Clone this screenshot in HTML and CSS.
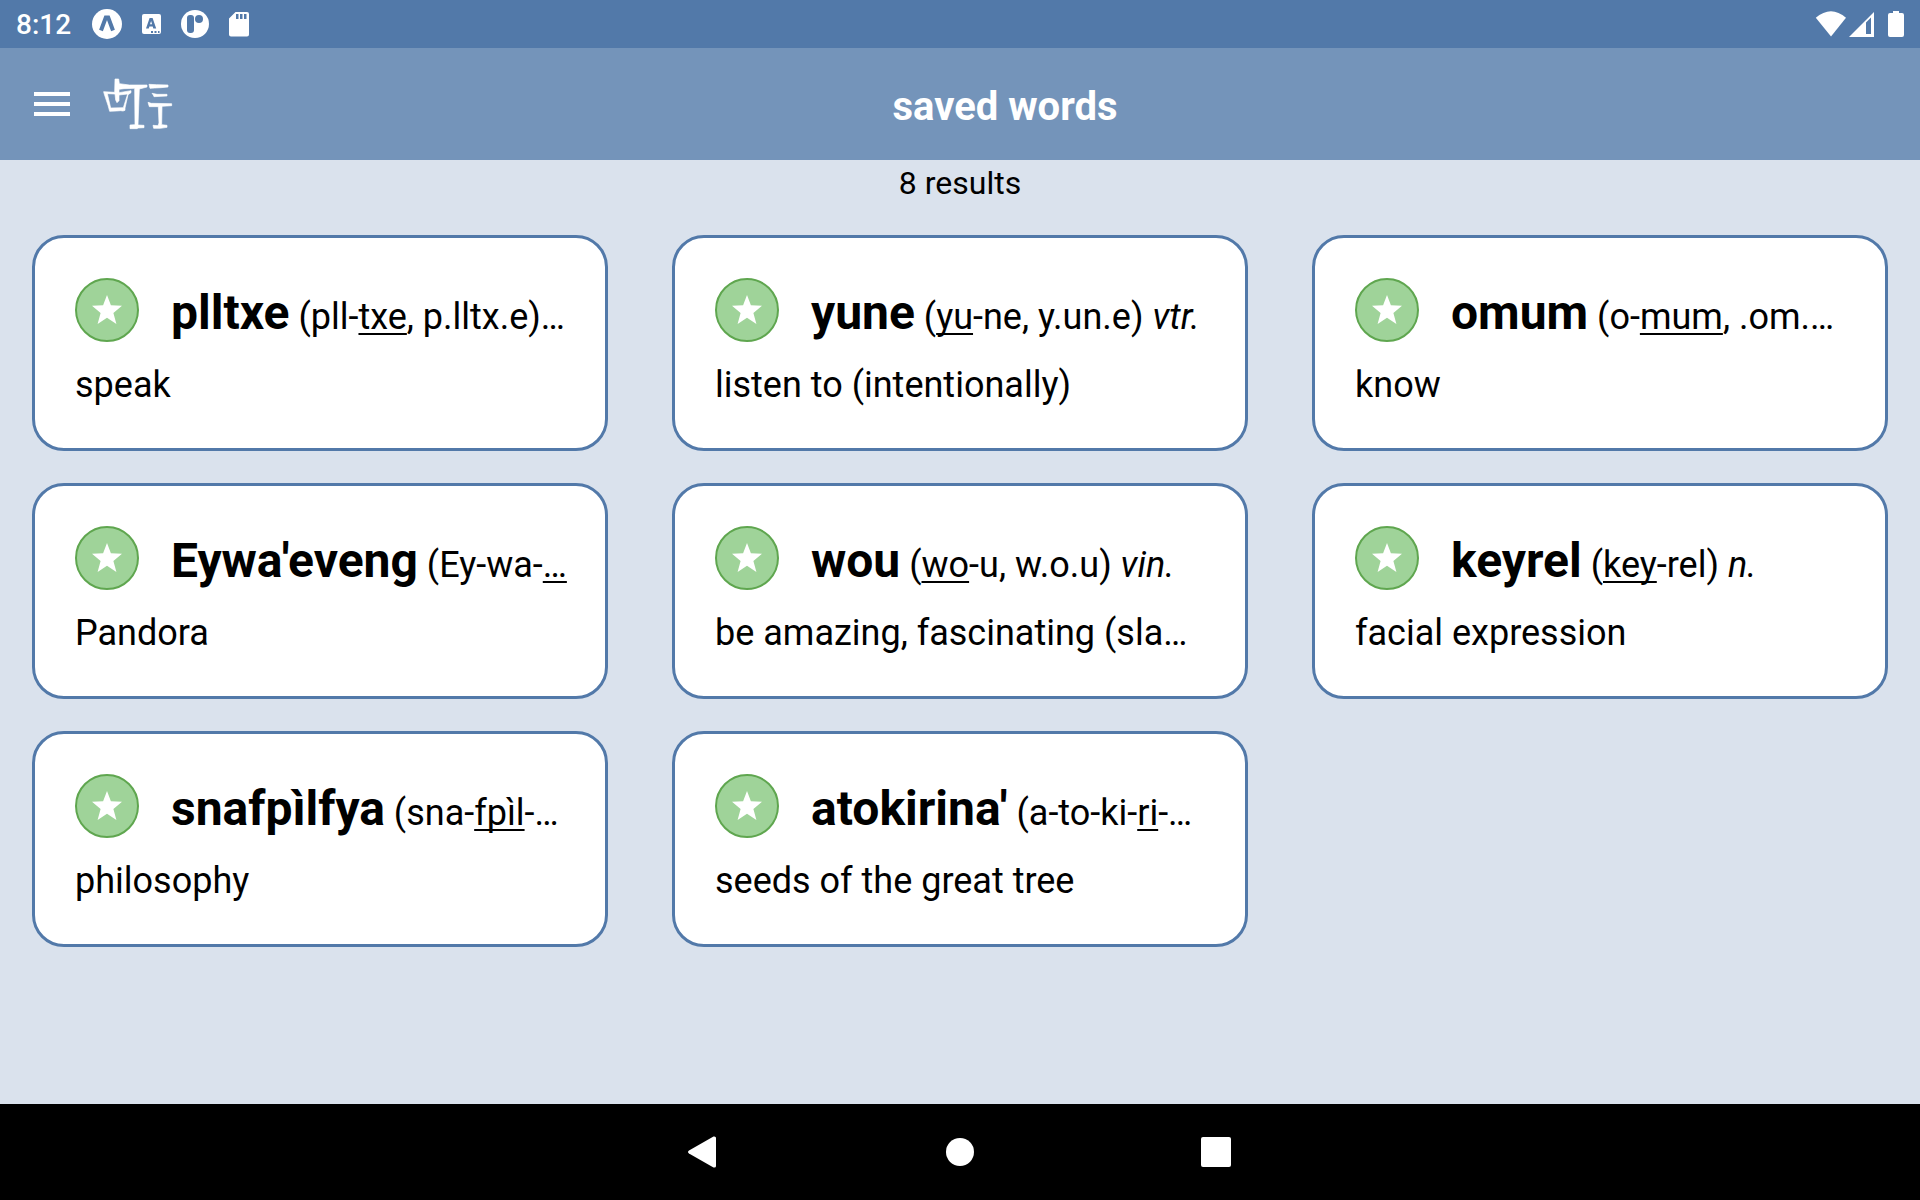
FILE: index.html
```html
<!DOCTYPE html>
<html lang="en">
<head>
<meta charset="utf-8">
<meta name="viewport" content="width=device-width, initial-scale=1">
<title>saved words</title>
<link rel="stylesheet" href="styles.css">
</head>
<body>
<svg class="defs" aria-hidden="true">
  <symbol id="star" viewBox="0 0 30 30"><path d="M15 0l3.900 10.200L30 10.800l-8.600 7.100L24.400 29 15 22.800 5.600 29l3-11.100L0 10.800l11.100-.6z"/></symbol>
</svg>
<div class="status">
  <span class="status-time">8:12</span>
  <svg class="status-notes" width="162" height="48" viewBox="0 0 162 48" aria-hidden="true">
    <circle cx="17" cy="24" r="15" fill="#fff"/>
    <path class="cut-line" d="M11 30.500L15.800 17.500h2.400L23 30.500"/>
    <rect x="52" y="14" width="19" height="20" rx="2" fill="#fff"/>
    <path class="cut" fill-rule="evenodd" d="M56 28.500l3.600-10.500h3l3.600 10.500h-2.900l-.6-2h-3.300l-.6 2zm4-4.300h2.100l-1-3.300zM61 31h2v2h-2zM64.500 31h2v2h-2zM68 31h1.500v2H68z"/>
    <circle cx="105" cy="24" r="14" fill="#fff"/>
    <rect class="cut" x="97" y="15" width="7" height="18" rx="3"/>
    <circle class="cut" cx="109" cy="19" r="4"/>
    <path fill="#fff" fill-rule="evenodd" d="M145.500 12H157q2 0 2 2v20.500q0 2-2 2h-16q-2 0-2-2v-16zM146 14v5h2.500v-5zM150 14v5h2.500v-5zM154 14v5h2.500v-5z"/>
  </svg>
  <svg class="status-system" width="90" height="48" viewBox="0 0 90 48" aria-label="Wi-Fi, signal and battery">
    <path fill="#fff" d="M16 36.500L.8 17.800Q16 4.800 31 17.800z"/>
    <path fill="#fff" fill-rule="evenodd" d="M34 37l25-25v25zM51 22.500V34h5V17.500z"/>
    <path fill="#fff" d="M78 11h6v2h3q2 0 2 2v20q0 2-2 2H75q-2 0-2-2V15q0-2 2-2h3z"/>
  </svg>
</div>
<header class="header">
  <button class="menu" type="button" aria-label="Open menu"><svg width="36" height="24" viewBox="0 0 36 24"><path fill="#fff" d="M0 0h36v4H0zM0 10h36v4H0zM0 20h36v4H0z"/></svg></button>
  <svg class="logo" width="72" height="52" viewBox="306 234 216 156" aria-hidden="true">
    <path fill-rule="evenodd" d="M345 237h11l2 14 30 4 53 0v6l-23 6-4 108 18 1v7l-19 1-1 2h-22v-11l15-1-1-109-32 1-15 2v10l36-6v6l-9 6-9 40v7l-6 2-7-1-13 1-20 1-5-18-12-36-1-5 33 2zM322 281l10 43 38-1 13-41-26 3 0 17-6 6-4-8-2-18z"/>
    <path d="M447 253l22 1 35 1v6l-21 2-19 1-14 1zM456 280l15 3 30 0v5l-18 1-21 1-2-5zM444 307l10 3 61 1v6l-29 2-1 55 16 2v6l-20 3h-20l-2-9 15 1 3-8-2-49-27 0z"/>
  </svg>
  <h1 class="title">saved words</h1>
</header>
<main class="main">
  <p class="count">8 results</p>
  <ul class="grid">
    <li class="card">
      <div class="entry"><button class="star" type="button" aria-label="Remove plltxe"><svg width="30" height="30"><use href="#star"/></svg></button><p class="word"><b>plltxe</b> (pll-<u>txe</u>, p.lltx.e)…</p></div>
      <p class="meaning">speak</p>
    </li>
    <li class="card">
      <div class="entry"><button class="star" type="button" aria-label="Remove yune"><svg width="30" height="30"><use href="#star"/></svg></button><p class="word"><b>yune</b> (<u>yu</u>-ne, y.un.e) <i>vtr.</i></p></div>
      <p class="meaning">listen to (intentionally)</p>
    </li>
    <li class="card">
      <div class="entry"><button class="star" type="button" aria-label="Remove omum"><svg width="30" height="30"><use href="#star"/></svg></button><p class="word"><b>omum</b> (o-<u>mum</u>, .om.…</p></div>
      <p class="meaning">know</p>
    </li>
    <li class="card">
      <div class="entry"><button class="star" type="button" aria-label="Remove Eywa'eveng"><svg width="30" height="30"><use href="#star"/></svg></button><p class="word"><b>Eywa'eveng</b> (Ey-wa-<u>…</u></p></div>
      <p class="meaning">Pandora</p>
    </li>
    <li class="card">
      <div class="entry"><button class="star" type="button" aria-label="Remove wou"><svg width="30" height="30"><use href="#star"/></svg></button><p class="word"><b>wou</b> (<u>wo</u>-u, w.o.u) <i>vin.</i></p></div>
      <p class="meaning">be amazing, fascinating (sla…</p>
    </li>
    <li class="card">
      <div class="entry"><button class="star" type="button" aria-label="Remove keyrel"><svg width="30" height="30"><use href="#star"/></svg></button><p class="word"><b>keyrel</b> (<u>key</u>-rel) <i>n.</i></p></div>
      <p class="meaning">facial expression</p>
    </li>
    <li class="card">
      <div class="entry"><button class="star" type="button" aria-label="Remove snafpìlfya"><svg width="30" height="30"><use href="#star"/></svg></button><p class="word"><b>snafpìlfya</b> (sna-<u>fpìl</u>-…</p></div>
      <p class="meaning">philosophy</p>
    </li>
    <li class="card">
      <div class="entry"><button class="star" type="button" aria-label="Remove atokirina'"><svg width="30" height="30"><use href="#star"/></svg></button><p class="word"><b>atokirina'</b> (a-to-ki-<u>ri</u>-…</p></div>
      <p class="meaning">seeds of the great tree</p>
    </li>
  </ul>
</main>
<nav class="navbar" aria-label="System">
  <button type="button" aria-label="Back"><svg width="32" height="32" viewBox="0 0 32 32"><path fill="#fff" d="M1 14.500L25.500.5Q28 0 28 2v28q0 2-2.500 1.500L1 17.500q-2-1.500 0-3z"/></svg></button>
  <button type="button" aria-label="Home"><svg width="32" height="32" viewBox="0 0 32 32"><circle cx="16" cy="16" r="14" fill="#fff"/></svg></button>
  <button type="button" aria-label="Overview"><svg width="32" height="32" viewBox="0 0 32 32"><rect x="1" y="1" width="30" height="30" rx="2" fill="#fff"/></svg></button>
</nav>
</body>
</html>
```
FILE: styles.css
```css
* { box-sizing: border-box; }
body {
  margin: 0;
  min-height: 100vh;
  display: flex;
  flex-direction: column;
  background: #dae2ed;
  color: #000;
  font-family: Roboto, "Liberation Sans", sans-serif;
}
p, h1, ul { margin: 0; padding: 0; }
svg { display: block; }
button { padding: 0; border: 0; background: none; cursor: pointer; }
.defs { display: none; }

.status {
  height: 48px;
  flex: none;
  display: flex;
  align-items: center;
  gap: 19px;
  padding: 0 15px 0 16px;
  background: #5279a9;
  color: #fff;
}
.status-time { font-size: 28px; font-weight: 500; line-height: 32px; padding-top: 2px; }
.status-system { margin-left: auto; }
.cut { fill: #5279a9; }
.cut-line { fill: none; stroke: #5279a9; stroke-width: 4; }

.header {
  height: 112px;
  flex: none;
  display: flex;
  align-items: center;
  padding: 0 98px 0 34px;
  background: #7494ba;
  color: #fff;
}
.logo { margin-left: 32px; fill: #fff; stroke: #fff; stroke-width: 2; }
.title { flex: 1; padding: 6px 0 0 14px; text-align: center; font-size: 40px; font-weight: 700; line-height: 48px; }

.main { flex: 1; }
.count { text-align: center; font-size: 32px; line-height: 46px; }
.grid {
  list-style: none;
  display: grid;
  grid-template-columns: repeat(3, minmax(0, 1fr));
  gap: 32px 64px;
  padding: 29px 32px 32px;
}
.card {
  padding: 40px;
  border: 3px solid #5279a9;
  border-radius: 32px;
  background: #fff;
}
.entry { display: flex; align-items: flex-start; gap: 32px; height: 64px; }
.star {
  width: 64px;
  height: 64px;
  flex: none;
  display: grid;
  place-items: center;
  border: 2px solid #5fa64f;
  border-radius: 50%;
  background: #9fd399;
  fill: #fff;
}
.word { min-width: 0; white-space: nowrap; font-size: 36px; line-height: 70px; }
.word b { font-size: 48px; font-weight: 700; }
.word u { text-decoration-thickness: 2px; text-underline-offset: 4px; text-decoration-skip-ink: none; }
.meaning { padding-top: 20px; font-size: 36px; line-height: 46px; white-space: nowrap; }

.navbar {
  height: 96px;
  flex: none;
  display: flex;
  justify-content: center;
  align-items: center;
  gap: 224px;
  background: #000;
}
```
